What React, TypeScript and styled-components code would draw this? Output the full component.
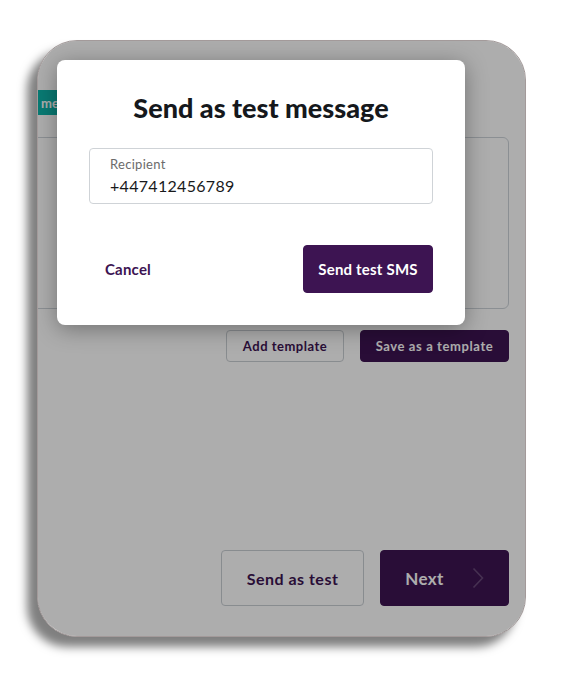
import styled, { createGlobalStyle } from "styled-components";

const GlobalStyle = createGlobalStyle`
    body {
        margin: 0;
        background: #ffffff;
        font-family: Lato, "Liberation Sans", sans-serif;
    }
`;

const purple = "#3d1452";

const StyledPage = styled.div`
    width: 561px;
    height: 682px;
    padding: 40px 0 0 37px;
    box-sizing: border-box;
`;

const StyledPanel = styled.div`
    position: relative;
    width: 489px;
    height: 597px;
    box-sizing: border-box;
    padding: 49px 16px 30px 0;
    display: flex;
    flex-direction: column;
    background: #ffffff;
    border: 1px solid #a39a9a;
    border-radius: 40px;
    overflow: hidden;
    box-shadow: -10px 10px 10px rgba(0, 0, 0, 0.5);
`;

const StyledChip = styled.div`
    align-self: flex-start;
    height: 25px;
    padding: 0 8px 0 3px;
    display: flex;
    align-items: center;
    background: #0eb4aa;
    color: #ffffff;
    font-size: 13px;
    font-weight: 700;
`;

const StyledMessageBox = styled.div`
    height: 172px;
    margin: 22px 0 0 -20px;
    box-sizing: border-box;
    border: 1px solid #cdd3d9;
    border-radius: 6px;
`;

const StyledRow = styled.div<{ $top: string }>`
    display: flex;
    justify-content: flex-end;
    gap: 16px;
    margin-top: ${(p) => p.$top};
`;

const StyledButton = styled.button<{ $primary?: boolean; $w: number; $h: number; $size: number; $spacing?: number }>`
    width: ${(p) => p.$w}px;
    height: ${(p) => p.$h}px;
    box-sizing: border-box;
    display: flex;
    align-items: center;
    justify-content: center;
    gap: 28px;
    padding: 0;
    border-radius: 4px;
    border: 1px solid ${(p) => (p.$primary ? purple : "#c9ced3")};
    background: ${(p) => (p.$primary ? purple : "transparent")};
    color: ${(p) => (p.$primary ? "#ffffff" : purple)};
    font-family: Lato, "Liberation Sans", sans-serif;
    font-size: ${(p) => p.$size}px;
    font-weight: 700;
    letter-spacing: ${(p) => p.$spacing ?? 0.3}px;
`;

const StyledBackdrop = styled.div`
    position: absolute;
    inset: 0;
    background: rgba(0, 0, 0, 0.32);
`;

const StyledModal = styled.div`
    position: absolute;
    left: 19px;
    top: 19px;
    width: 408px;
    height: 265px;
    box-sizing: border-box;
    padding: 32px;
    display: flex;
    flex-direction: column;
    background: #ffffff;
    border-radius: 8px;
    box-shadow: 0 4px 22px rgba(0, 0, 0, 0.35);
`;

const StyledTitle = styled.h2`
    margin: 0;
    text-align: center;
    font-size: 27px;
    line-height: 32px;
    font-weight: 900;
    color: #15181c;
`;

const StyledField = styled.div`
    margin-top: 24px;
    height: 56px;
    box-sizing: border-box;
    padding: 7px 20px 0;
    border: 1px solid #cfd3d7;
    border-radius: 4px;
`;

const StyledLabel = styled.div`
    font-size: 13px;
    line-height: 17px;
    color: #6b6b6b;
    letter-spacing: 0.3px;
`;

const StyledValue = styled.div`
    margin-top: 2px;
    font-size: 16px;
    line-height: 22px;
    color: #18191b;
    letter-spacing: 0.3px;
`;

const StyledActions = styled.div`
    margin-top: auto;
    display: flex;
    justify-content: space-between;
    align-items: center;
`;

const StyledCancel = styled.button`
    padding: 0 16px;
    border: none;
    background: none;
    color: ${purple};
    font-family: Lato, "Liberation Sans", sans-serif;
    font-size: 15px;
    font-weight: 700;
    letter-spacing: 0.2px;
`;

// chevron inside the Next button
const Chevron = () => (
    <svg width="12" height="22" viewBox="0 0 12 22" fill="none">
        <path d="M1.5 1.5 L10.5 11 L1.5 20.5" stroke="rgba(255,255,255,0.22)" strokeWidth="1.6" />
    </svg>
);

export default () => {
    return (
        <StyledPage>
            <GlobalStyle />
            <StyledPanel>
                <StyledChip>message</StyledChip>
                <StyledMessageBox />
                <StyledRow $top="21px">
                    <StyledButton $w={118} $h={32} $size={13} $spacing={0.5}>
                        Add template
                    </StyledButton>
                    <StyledButton $primary $w={149} $h={32} $size={13} $spacing={0.6}>
                        Save as a template
                    </StyledButton>
                </StyledRow>
                <StyledRow $top="auto">
                    <StyledButton $w={143} $h={56} $size={16} $spacing={0.5}>
                        Send as test
                    </StyledButton>
                    <StyledButton $primary $w={129} $h={56} $size={17} $spacing={0.4}>
                        Next
                        <Chevron />
                    </StyledButton>
                </StyledRow>
                <StyledBackdrop />
                <StyledModal>
                    <StyledTitle>Send as test message</StyledTitle>
                    <StyledField>
                        <StyledLabel>Recipient</StyledLabel>
                        <StyledValue>+447412456789</StyledValue>
                    </StyledField>
                    <StyledActions>
                        <StyledCancel>Cancel</StyledCancel>
                        <StyledButton $primary $w={130} $h={48} $size={15} $spacing={0.2}>
                            Send test SMS
                        </StyledButton>
                    </StyledActions>
                </StyledModal>
            </StyledPanel>
        </StyledPage>
    );
};
